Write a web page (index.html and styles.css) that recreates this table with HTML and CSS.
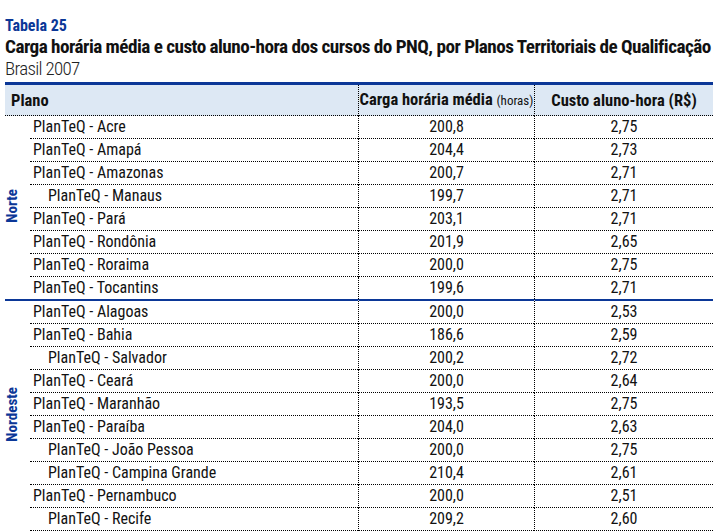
FILE: index.html
```html
<!DOCTYPE html>
<html lang="pt-BR">
<head>
<meta charset="utf-8">
<title>Tabela 25</title>
<link rel="stylesheet" href="styles.css">
</head>
<body>
<div class="page">
  <div class="label">Tabela 25</div>
  <h1 class="title">Carga horária média e custo aluno-hora dos cursos do PNQ, por Planos Territoriais de Qualificação</h1>
  <div class="subtitle">Brasil 2007</div>
  <table class="data">
    <colgroup>
      <col class="c-region"><col class="c-name"><col class="c-hours"><col class="c-cost">
    </colgroup>
    <thead>
      <tr>
        <th colspan="2" class="h-plano">Plano</th>
        <th class="h-num">Carga horária média <span class="unit">(horas)</span></th>
        <th class="h-num">Custo aluno-hora (R$)</th>
      </tr>
    </thead>
    <tbody class="group first">
      <tr><th rowspan="8" class="region"><span>Norte</span></th><td class="name">PlanTeQ - Acre</td><td class="num">200,8</td><td class="num">2,75</td></tr>
      <tr><td class="name">PlanTeQ - Amapá</td><td class="num">204,4</td><td class="num">2,73</td></tr>
      <tr><td class="name">PlanTeQ - Amazonas</td><td class="num">200,7</td><td class="num">2,71</td></tr>
      <tr><td class="name sub">PlanTeQ - Manaus</td><td class="num">199,7</td><td class="num">2,71</td></tr>
      <tr><td class="name">PlanTeQ - Pará</td><td class="num">203,1</td><td class="num">2,71</td></tr>
      <tr><td class="name">PlanTeQ - Rondônia</td><td class="num">201,9</td><td class="num">2,65</td></tr>
      <tr><td class="name">PlanTeQ - Roraima</td><td class="num">200,0</td><td class="num">2,75</td></tr>
      <tr class="last"><td class="name">PlanTeQ - Tocantins</td><td class="num">199,6</td><td class="num">2,71</td></tr>
    </tbody>
    <tbody class="group">
      <tr><th rowspan="10" class="region"><span>Nordeste</span></th><td class="name">PlanTeQ - Alagoas</td><td class="num">200,0</td><td class="num">2,53</td></tr>
      <tr><td class="name">PlanTeQ - Bahia</td><td class="num">186,6</td><td class="num">2,59</td></tr>
      <tr><td class="name sub">PlanTeQ - Salvador</td><td class="num">200,2</td><td class="num">2,72</td></tr>
      <tr><td class="name">PlanTeQ - Ceará</td><td class="num">200,0</td><td class="num">2,64</td></tr>
      <tr><td class="name">PlanTeQ - Maranhão</td><td class="num">193,5</td><td class="num">2,75</td></tr>
      <tr><td class="name">PlanTeQ - Paraíba</td><td class="num">204,0</td><td class="num">2,63</td></tr>
      <tr><td class="name sub">PlanTeQ - João Pessoa</td><td class="num">200,0</td><td class="num">2,75</td></tr>
      <tr><td class="name sub">PlanTeQ - Campina Grande</td><td class="num">210,4</td><td class="num">2,61</td></tr>
      <tr><td class="name">PlanTeQ - Pernambuco</td><td class="num">200,0</td><td class="num">2,51</td></tr>
      <tr><td class="name sub">PlanTeQ - Recife</td><td class="num">209,2</td><td class="num">2,60</td></tr>
    </tbody>
  </table>
</div>
</body>
</html>
```

FILE: styles.css
```css
html, body {
  margin: 0;
  padding: 0;
  background: #ffffff;
}

body {
  font-family: "Roboto Condensed", "Roboto", sans-serif;
  font-stretch: condensed;
  color: #111111;
}

.page {
  padding: 17px 0 0 5px;
}

.label {
  font-size: 16px;
  line-height: 18px;
  font-weight: bold;
  color: #0b3797;
}

.title {
  margin: 0;
  font-size: 19.2px;
  line-height: 23px;
  font-weight: bold;
  letter-spacing: -0.53px;
  color: #111111;
  white-space: nowrap;
}

.subtitle {
  font-size: 19px;
  line-height: 21px;
  font-weight: 300;
  letter-spacing: -0.7px;
  color: #222222;
}

.data {
  margin-top: 3px;
  width: 708px;
  table-layout: fixed;
  border-collapse: separate;
  border-spacing: 0;
  border-top: 3px solid #0b3797;
  font-size: 16px;
}

.c-region { width: 25px; }
.c-name { width: 328px; }
.c-hours { width: 176px; }
.c-cost { width: 179px; }

.data thead th {
  background: #dde8f4;
  line-height: 29px;
  padding: 0;
  font-size: 16.5px;
  font-weight: bold;
  border-bottom: 1px dotted #000000;
  white-space: nowrap;
}

.h-plano {
  text-align: left;
  padding-left: 6px !important;
}

.h-num {
  text-align: center;
  border-left: 1px dotted #000000;
}

.unit {
  font-size: 13px;
  font-weight: normal;
}

.data td {
  padding: 0;
  line-height: 22px;
  border-bottom: 1px dotted #000000;
  white-space: nowrap;
}

.data tr.last td {
  border-bottom: none;
}

.data .name {
  padding-left: 3px;
}

.data .name.sub {
  padding-left: 18px;
}

.data .num {
  text-align: center;
  border-left: 1px dotted #000000;
}

.group + .group tr:first-child td,
.group + .group tr:first-child th {
  border-top: 2px solid #0b3797;
}

.region {
  padding: 0;
  vertical-align: middle;
  text-align: left;
}

.region span {
  display: inline-block;
  writing-mode: vertical-rl;
  transform: rotate(180deg);
  font-size: 15px;
  font-weight: bold;
  color: #0b3797;
  line-height: 14px;
}
```
